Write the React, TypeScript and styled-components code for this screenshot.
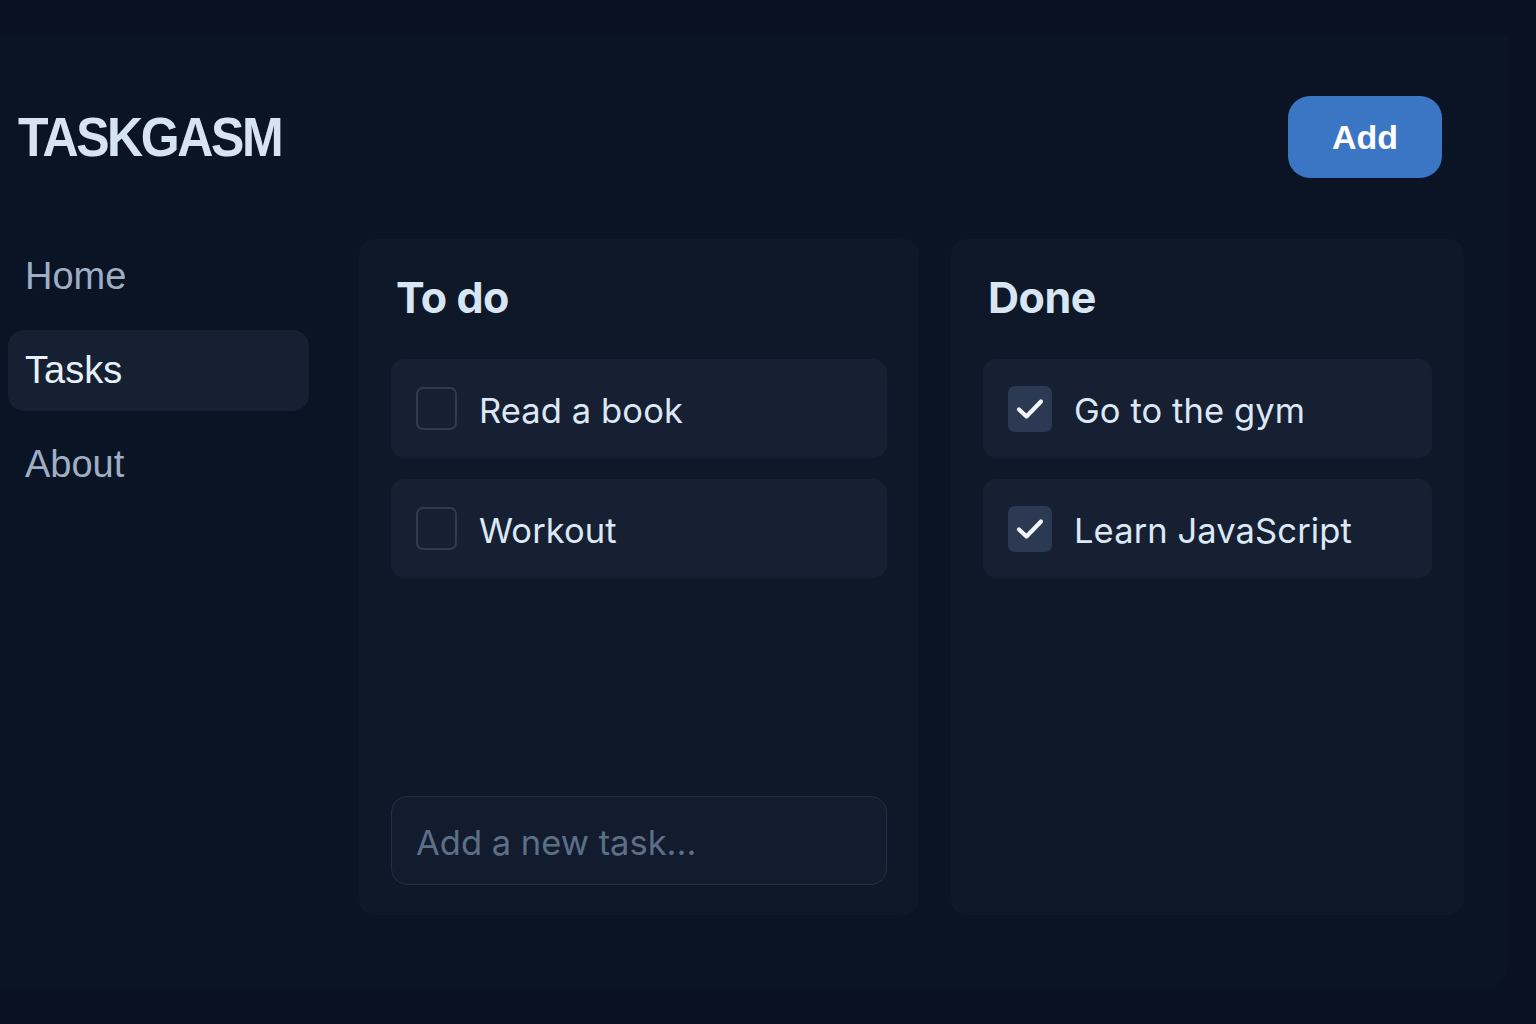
import React from "react";
import styled, { createGlobalStyle } from "styled-components";

const Global = createGlobalStyle`
  html, body { margin: 0; padding: 0; background: #0a1221; }
  body { width: 1536px; height: 1024px; overflow: hidden; font-family: Inter, "Liberation Sans", sans-serif; }
  * { box-sizing: border-box; }
`;

const Frame = styled.div`
  margin-top: 36px;
  width: 1508px;
  height: 954px;
  background: #0b1425;
  border-radius: 0 0 26px 0;
  display: flex;
  flex-direction: column;
`;

const Header = styled.header`
  display: flex;
  align-items: center;
  justify-content: space-between;
  padding: 60px 66px 0 18px;
`;

const Logo = styled.h1`
  margin: 0;
  font-family: "Liberation Sans", Arial, sans-serif;
  font-weight: 700;
  font-size: 50px;
  letter-spacing: -2.4px;
  color: #d6e4f2;
  line-height: 1;
  transform: scaleY(1.1);
`;

const AddButton = styled.button`
  width: 154px;
  height: 82px;
  border: none;
  border-radius: 22px;
  background: #3b76c4;
  color: #ffffff;
  font-family: "Liberation Sans", Arial, sans-serif;
  font-weight: 700;
  font-size: 34px;
  cursor: pointer;
`;

const Body = styled.div`
  display: flex;
  align-items: flex-start;
  padding: 58px 0 0 8px;
  gap: 50px;
`;

const Sidebar = styled.nav`
  width: 301px;
  display: flex;
  flex-direction: column;
  gap: 13px;
`;

const NavItem = styled.a<{ $active?: boolean }>`
  height: 81px;
  display: flex;
  align-items: center;
  padding-left: 17px;
  border-radius: 16px;
  background: ${(p) => (p.$active ? "#162033" : "transparent")};
  color: ${(p) => (p.$active ? "#e8f0fa" : "#9eaec4")};
  font-family: "Liberation Sans", Arial, sans-serif;
  font-size: 38px;
  text-decoration: none;
`;

const Board = styled.div`
  margin-top: 3px;
  display: flex;
  gap: 32px;
`;

const Panel = styled.section<{ $width: number }>`
  width: ${(p) => p.$width}px;
  height: 676px;
  background: #0f1829;
  border-radius: 16px;
  padding: 30px 32px 30px 32px;
  display: flex;
  flex-direction: column;
`;

const PanelTitle = styled.h2`
  margin: 0 0 34px 5px;
  font-family: Inter, "Liberation Sans", sans-serif;
  font-weight: 700;
  font-size: 43px;
  line-height: 56px;
  color: #d8e5f3;
  letter-spacing: -0.5px;
`;

const TaskList = styled.div`
  display: flex;
  flex-direction: column;
  gap: 21px;
`;

const TaskRow = styled.div`
  height: 99px;
  background: #172033;
  border-radius: 14px;
  display: flex;
  align-items: center;
  padding-left: 25px;
  gap: 22px;
`;

const Box = styled.span<{ $checked?: boolean }>`
  width: ${(p) => (p.$checked ? 44 : 41)}px;
  height: ${(p) => (p.$checked ? 46 : 43)}px;
  border-radius: 7px;
  border: ${(p) => (p.$checked ? "none" : "2.5px solid #2e3c53")};
  background: ${(p) => (p.$checked ? "#2b3a52" : "transparent")};
  display: flex;
  align-items: center;
  justify-content: center;
  flex-shrink: 0;
`;

const TaskText = styled.span`
  font-family: Inter, "Liberation Sans", sans-serif;
  font-size: 34.5px;
  color: #dde8f5;
  letter-spacing: 0.1px;
  padding-top: 3px;
`;

const NewTask = styled.input`
  margin-top: auto;
  height: 89px;
  width: 100%;
  border: 1.5px solid #232e42;
  border-radius: 16px;
  background: #131c2e;
  padding: 3px 24px 0;
  font-family: Inter, "Liberation Sans", sans-serif;
  font-size: 34.5px;
  color: #dde8f5;
  outline: none;
  &::placeholder { color: #5d6f87; }
`;

const Check = () => (
  <svg width="28" height="24" viewBox="0 0 28 24">
    <polyline points="3,12.5 10.5,19.5 25,4.5" fill="none" stroke="#f2f7fc" strokeWidth="4.2" strokeLinecap="round" strokeLinejoin="round" />
  </svg>
);

export default function App() {
  return (
    <>
      <Global />
      <Frame>
        <Header>
          <Logo>TASKGASM</Logo>
          <AddButton>Add</AddButton>
        </Header>
        <Body>
          <Sidebar>
            <NavItem>Home</NavItem>
            <NavItem $active>Tasks</NavItem>
            <NavItem>About</NavItem>
          </Sidebar>
          <Board>
            <Panel $width={560}>
              <PanelTitle>To do</PanelTitle>
              <TaskList>
                <TaskRow>
                  <Box />
                  <TaskText>Read a book</TaskText>
                </TaskRow>
                <TaskRow>
                  <Box />
                  <TaskText>Workout</TaskText>
                </TaskRow>
              </TaskList>
              <NewTask placeholder="Add a new task..." />
            </Panel>
            <Panel $width={513}>
              <PanelTitle>Done</PanelTitle>
              <TaskList>
                <TaskRow>
                  <Box $checked><Check /></Box>
                  <TaskText>Go to the gym</TaskText>
                </TaskRow>
                <TaskRow>
                  <Box $checked><Check /></Box>
                  <TaskText>Learn JavaScript</TaskText>
                </TaskRow>
              </TaskList>
            </Panel>
          </Board>
        </Body>
      </Frame>
    </>
  );
}
